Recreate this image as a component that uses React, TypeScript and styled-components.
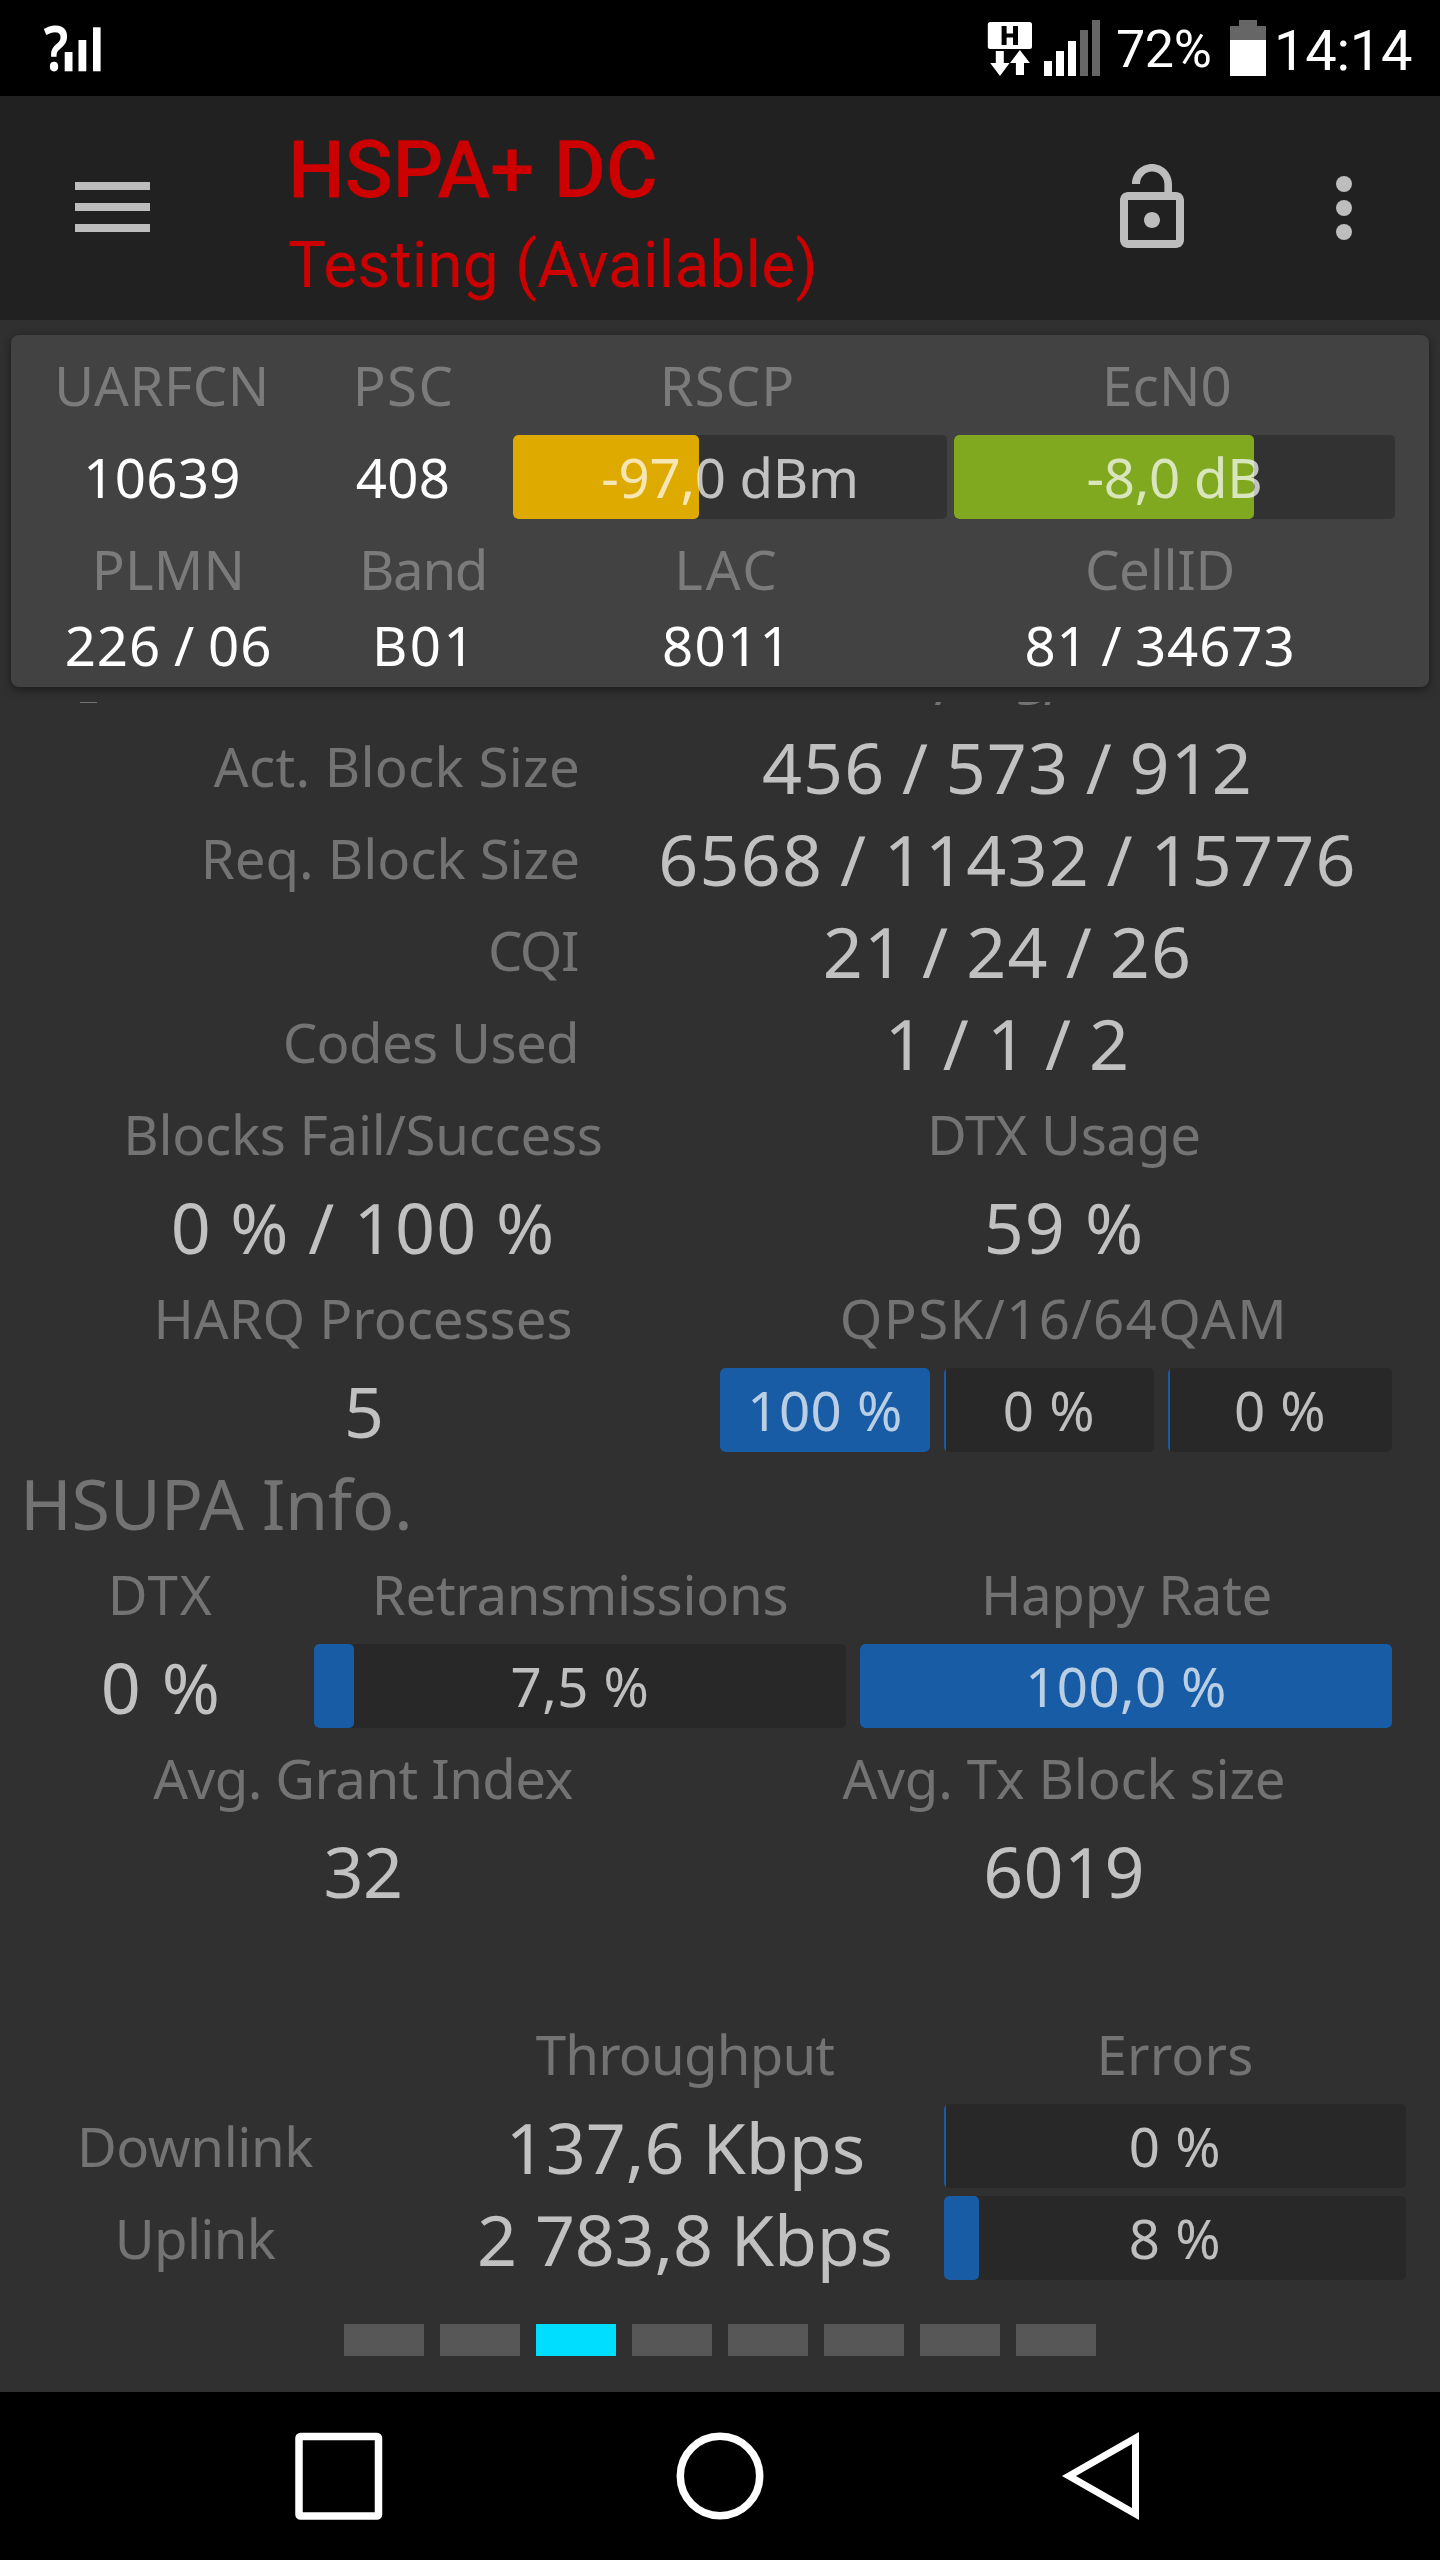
import React from "react";
import styled, { createGlobalStyle } from "styled-components";

const GlobalStyle = createGlobalStyle`
  body {
    margin: 0;
    background: #303030;
  }
  * {
    box-sizing: border-box;
  }
`;

const blue = "#195ca6";
const amber = "#dfaa00";
const green = "#80a920";

const Screen = styled.div`
  display: flex;
  flex-direction: column;
  width: 1440px;
  height: 2560px;
  overflow: hidden;
  background: #303030;
  font-family: "Noto Sans", "Open Sans", sans-serif;
`;

/* ---------- status bar ---------- */

const StatusBar = styled.header`
  display: flex;
  justify-content: space-between;
  align-items: flex-start;
  height: 96px;
  padding: 0 27px 0 40px;
  background: #000;
  color: #fff;
  font-family: Roboto, sans-serif;
`;

const StatusGroup = styled.div`
  display: flex;
  align-items: flex-start;
  height: 96px;
`;

const BatteryLevel = styled.span`
  width: 96px;
  margin: 0 18px 0 15px;
  font-size: 52px;
  line-height: 100px;
  letter-spacing: -0.37px;
  white-space: nowrap;
`;

const Clock = styled.span`
  width: 139px;
  margin-left: 8px;
  font-size: 56px;
  line-height: 102px;
  letter-spacing: -0.22px;
  white-space: nowrap;
`;

const UnknownSignalIcon = () => (
  <svg width="64" height="96" viewBox="40 0 64 96" fill="#fff">
    <text
      transform="translate(43.5 70.5) scale(0.84 1)"
      fontFamily="Noto Sans, sans-serif"
      fontWeight="600"
      fontSize="64"
    >
      ?
    </text>
    <rect x="64.7" y="52" width="7.8" height="19.3" />
    <rect x="78.5" y="40" width="7.8" height="31.3" />
    <rect x="93" y="27.3" width="7.6" height="44" />
  </svg>
);

const DataIcon = () => (
  <svg width="56" height="96" viewBox="986 0 56 96" fill="#fff">
    <rect x="986.8" y="22" width="44.2" height="27" rx="2.5" />
    <path d="M1000.6 26h5v7.4h6.4V26h5v19h-5v-7.4h-6.4V45h-5z" fill="#000" />
    <path d="M994.8 51h8v12h5.8l-9.6 13-9.8-13h5.6z" />
    <path d="M1018.9 50l10 13h-5.9v12h-8.1V63h-5.9z" />
  </svg>
);

const SignalIcon = () => (
  <svg width="58" height="96" viewBox="1042 0 58 96" fill="#fff">
    <rect x="1043" y="61" width="8" height="15" />
    <rect x="1055" y="51" width="8" height="25" />
    <rect x="1067" y="41" width="8" height="35" />
    <rect x="1079" y="30" width="8" height="46" fill="#666" />
    <rect x="1091" y="20" width="8" height="56" fill="#666" />
  </svg>
);

const BatteryIcon = () => (
  <svg width="36" height="96" viewBox="1229 0 36 96">
    <path d="M1238 20h18v6h9v14h-36V26h9z" fill="#666" />
    <rect x="1229" y="40" width="36" height="36" fill="#fff" />
  </svg>
);

/* ---------- toolbar ---------- */

const Toolbar = styled.div`
  display: flex;
  height: 224px;
  padding-right: 48px;
  background: #212121;
`;

const MenuButton = styled.div`
  display: flex;
  flex-direction: column;
  gap: 13px;
  width: 288px;
  padding: 86px 0 0 74.5px;
`;

const MenuLine = styled.span`
  width: 75.5px;
  height: 8px;
  background: #bdbdbd;
`;

const Titles = styled.div`
  display: flex;
  flex-direction: column;
  flex: 1;
  padding: 24px 0 0;
  color: #c00;
  font-family: Roboto, sans-serif;
  white-space: nowrap;
`;

const Title = styled.div`
  font-size: 80px;
  font-weight: 500;
  line-height: 100px;
  letter-spacing: -0.31px;
`;

const Subtitle = styled.div`
  font-size: 64px;
  line-height: 92px;
  letter-spacing: 0.16px;
`;

const ToolbarActions = styled.div`
  display: flex;
  gap: 96px;
  padding-top: 64px;
`;

const LockOpenIcon = () => (
  <svg width="96" height="96" viewBox="0 0 24 24" fill="#bdbdbd">
    <path d="M12 17c1.1 0 2-.9 2-2s-.9-2-2-2-2 .9-2 2 .9 2 2 2zm6-9h-1V6c0-2.76-2.24-5-5-5S7 3.24 7 6h2c0-1.71 1.34-3.1 3-3.1 1.71 0 3.1 1.39 3.1 3.1v2H6c-1.1 0-2 .9-2 2v10c0 1.1.9 2 2 2h12c1.1 0 2-.9 2-2V10c0-1.1-.9-2-2-2zm0 12H6V10h12v10z" />
  </svg>
);

const MoreIcon = () => (
  <svg width="96" height="96" viewBox="0 0 24 24" fill="#bdbdbd">
    <circle cx="12" cy="6" r="2" />
    <circle cx="12" cy="12" r="2" />
    <circle cx="12" cy="18" r="2" />
  </svg>
);

/* ---------- shared cells ---------- */

const Row = styled.div<{ $cols: string; $height?: number }>`
  display: grid;
  grid-template-columns: ${(p) => p.$cols};
  height: ${(p) => p.$height ?? 92}px;
  line-height: ${(p) => p.$height ?? 92}px;
  align-items: center;
  white-space: nowrap;
`;

const Label = styled.div<{ $track?: number; $align?: string; $card?: boolean }>`
  color: ${(p) => (p.$card ? "#7b7b7b" : "#737373")};
  font-size: 54.6px;
  letter-spacing: ${(p) => p.$track ?? 0}px;
  text-align: ${(p) => p.$align ?? "center"};
`;

const CardValue = styled.div<{ $track?: number; $space?: number; $indent?: number }>`
  padding-left: ${(p) => p.$indent ?? 0}px;
  color: #fff;
  font-size: 54.6px;
  letter-spacing: ${(p) => p.$track ?? 0}px;
  word-spacing: ${(p) => p.$space ?? 0}px;
  text-align: center;
`;

const Value = styled.div<{ $track?: number; $space?: number; $indent?: number }>`
  padding: 2px 0 0 ${(p) => p.$indent ?? 0}px;
  color: #c1c1c1;
  font-size: 70px;
  line-height: 90px;
  letter-spacing: ${(p) => p.$track ?? 0}px;
  word-spacing: ${(p) => p.$space ?? 0}px;
  text-align: center;
`;

const SectionTitle = styled.div`
  height: 92px;
  padding: 1px 0 0 20px;
  color: #737373;
  font-size: 70px;
  line-height: 92px;
  letter-spacing: -0.27px;
`;

const Track = styled.div<{ $card?: boolean; $left?: number; $right?: number }>`
  position: relative;
  height: 84px;
  margin: 0 ${(p) => p.$right ?? 0}px 0 ${(p) => p.$left ?? 0}px;
  border-radius: 5px;
  overflow: hidden;
  background: ${(p) => (p.$card ? "#323232" : "#282828")};
`;

const Fill = styled.div<{ $color: string; $percent: number }>`
  position: absolute;
  inset: 0 auto 0 0;
  width: ${(p) => p.$percent}%;
  min-width: 2px;
  border-radius: ${(p) => (p.$percent > 0 ? 5 : 0)}px;
  background: ${(p) => p.$color};
`;

const TrackText = styled.div<{ $track?: number }>`
  position: relative;
  color: rgba(255, 255, 255, 0.7);
  font-size: 54.6px;
  line-height: 84px;
  letter-spacing: ${(p) => p.$track ?? 0}px;
  text-align: center;
`;

type MeterProps = {
  text: string;
  percent: number;
  color?: string;
  track?: number;
  card?: boolean;
  left?: number;
  right?: number;
};

const Meter = ({ text, percent, color = blue, track, card, left, right }: MeterProps) => (
  <Track $card={card} $left={left} $right={right}>
    <Fill $color={color} $percent={percent} />
    <TrackText $track={track}>{text}</TrackText>
  </Track>
);

/* ---------- panels ---------- */

const CardArea = styled.div`
  height: 382px;
  padding: 15px 11px 15px;
  overflow: hidden;
`;

const Card = styled.section`
  height: 352px;
  padding-top: 4px;
  border-radius: 8px;
  background: #424242;
  box-shadow: 0 3px 10px rgba(0, 0, 0, 0.45);
`;

const Details = styled.section`
  height: 1306px;
`;

const ScrolledEdge = styled.svg`
  display: block;
`;

const Totals = styled.section`
  height: 316px;
`;

const Pager = styled.div`
  display: flex;
  justify-content: center;
  gap: 16px;
  height: 68px;
`;

const PageMark = styled.span<{ $active: boolean }>`
  width: 80px;
  height: 32px;
  background: ${(p) => (p.$active ? "#00deff" : "#575757")};
`;

const NavBar = styled.nav`
  display: flex;
  justify-content: space-between;
  height: 168px;
  padding: 36px 297px 0 291px;
  background: #000;
`;

const NavIcon = styled.svg`
  width: 96px;
  height: 96px;
  fill: none;
  stroke: #fff;
`;

const pairCols = "580px 855px";
const halfCols = "726px 676px";

export default function App() {
  return (
    <>
      <GlobalStyle />
      <Screen>
        <StatusBar>
          <UnknownSignalIcon />
          <StatusGroup>
            <DataIcon />
            <SignalIcon />
            <BatteryLevel>72%</BatteryLevel>
            <BatteryIcon />
            <Clock>14:14</Clock>
          </StatusGroup>
        </StatusBar>

        <Toolbar>
          <MenuButton>
            <MenuLine />
            <MenuLine />
            <MenuLine />
          </MenuButton>
          <Titles>
            <Title>HSPA+ DC</Title>
            <Subtitle>Testing (Available)</Subtitle>
          </Titles>
          <ToolbarActions>
            <LockOpenIcon />
            <MoreIcon />
          </ToolbarActions>
        </Toolbar>

        <CardArea>
          <Card>
            <Row $cols="302px 181px 467px 412px">
              <Label $card $track={0.53}>UARFCN</Label>
              <Label $card $track={1.35}>PSC</Label>
              <Label $card $track={1.06}>RSCP</Label>
              <Label $card $track={0.18}>EcN0</Label>
            </Row>
            <Row $cols="302px 180px 461px 441px">
              <CardValue $track={0.3}>10639</CardValue>
              <CardValue $track={0.22}>408</CardValue>
              <Meter card text="-97,0 dBm" percent={42.9} color={amber} track={-0.32} left={20} right={7} />
              <Meter card text="-8,0 dB" percent={68} color={green} track={-0.3} />
            </Row>
            <Row $cols="315px 194px 414px 452px">
              <Label $card $track={0.18}>PLMN</Label>
              <Label $card $track={-1.35}>Band</Label>
              <Label $card $track={2.8}>LAC</Label>
              <Label $card $track={-0.27}>CellID</Label>
            </Row>
            <Row $cols="315px 194px 414px 452px" $height={60}>
              <CardValue $track={0.9} $space={-2.2}>226 / 06</CardValue>
              <CardValue $track={2.34} $indent={3}>B01</CardValue>
              <CardValue $track={1.21}>8011</CardValue>
              <CardValue $track={0.9} $space={-2.6}>81 / 34673</CardValue>
            </Row>
          </Card>
        </CardArea>

        <Details>
          <ScrolledEdge width="1440" height="18" viewBox="0 0 1440 18">
            <rect x="80" y="0" width="17" height="1" fill="#737373" />
            <path d="M936 0h5l-1 3h-5z M1045.500 0h5l-1 3h-5z" fill="#737373" />
            <path d="M1018.500 0h21.500q-5 3-10 3h-5q-4 0-6.500-1z" fill="#737373" />
          </ScrolledEdge>
          <Row $cols={pairCols}>
            <Label $align="right" $track={0.26}>Act. Block Size</Label>
            <Value $track={1.2} $space={-3}>456 / 573 / 912</Value>
          </Row>
          <Row $cols={pairCols}>
            <Label $align="right" $track={-0.04}>Req. Block Size</Label>
            <Value $track={1.2} $space={-2.75}>6568 / 11432 / 15776</Value>
          </Row>
          <Row $cols="578px 859px">
            <Label $align="right" $track={-1.5}>CQI</Label>
            <Value $track={1.2} $space={-2.5}>21 / 24 / 26</Value>
          </Row>
          <Row $cols="579px 857px">
            <Label $align="right" $track={-0.64}>Codes Used</Label>
            <Value $track={1.2} $space={-2.6}>1 / 1 / 2</Value>
          </Row>
          <Row $cols={halfCols}>
            <Label $track={-0.29}>Blocks Fail/Success</Label>
            <Label $track={-0.21}>DTX Usage</Label>
          </Row>
          <Row $cols={halfCols}>
            <Value $track={1.2} $space={-1}>0 % / 100 %</Value>
            <Value $track={1.04}>59 %</Value>
          </Row>
          <Row $cols={halfCols}>
            <Label $track={-0.06}>HARQ Processes</Label>
            <Label $track={1.34}>QPSK/16/64QAM</Label>
          </Row>
          <Row $cols="720px 224px 224px 224px">
            <Value $indent={8}>5</Value>
            <Meter text="100 %" percent={100} track={0.48} right={14} />
            <Meter text="0 %" percent={0} track={0.64} right={14} />
            <Meter text="0 %" percent={0} track={0.44} />
          </Row>
          <SectionTitle>HSUPA Info.</SectionTitle>
          <Row $cols="321px 518px 575px">
            <Label $track={1.72}>DTX</Label>
            <Label $track={-0.29}>Retransmissions</Label>
            <Label $track={-0.31}>Happy Rate</Label>
          </Row>
          <Row $cols="314px 546px 532px">
            <Value $indent={8} $track={1.38}>0 %</Value>
            <Meter text="7,5 %" percent={7.5} track={0.43} right={14} />
            <Meter text="100,0 %" percent={100} track={0.33} />
          </Row>
          <Row $cols={halfCols}>
            <Label $track={-0.59}>Avg. Grant Index</Label>
            <Label $track={-0.18}>Avg. Tx Block size</Label>
          </Row>
          <Row $cols={halfCols}>
            <Value $track={-0.5}>32</Value>
            <Value $track={0.36}>6019</Value>
          </Row>
        </Details>

        <Totals>
          <Row $cols="426px 518px 462px">
            <span />
            <Label $track={-0.83}>Throughput</Label>
            <Label $track={0.17}>Errors</Label>
          </Row>
          <Row $cols="390px 554px 462px">
            <Label $track={-0.41}>Downlink</Label>
            <Value $indent={37} $track={-0.08}>137,6 Kbps</Value>
            <Meter text="0 %" percent={0} track={0.5} />
          </Row>
          <Row $cols="390px 554px 462px">
            <Label $track={-0.68}>Uplink</Label>
            <Value $indent={36} $track={-0.21}>2 783,8 Kbps</Value>
            <Meter text="8 %" percent={7.6} track={0.5} />
          </Row>
        </Totals>

        <Pager>
          {Array.from({ length: 8 }, (_, i) => (
            <PageMark key={i} $active={i === 2} />
          ))}
        </Pager>

        <NavBar>
          <NavIcon viewBox="291 2428 96 96" strokeWidth="7.5">
            <rect x="299" y="2436.500" width="79.500" height="79.500" rx="1.500" />
          </NavIcon>
          <NavIcon viewBox="669 2428 96 96" strokeWidth="7.5">
            <circle cx="720" cy="2476" r="39.700" />
          </NavIcon>
          <NavIcon viewBox="1047 2428 96 96" strokeWidth="7">
            <path d="M1135.500 2438L1069 2476L1135.500 2514Z" />
          </NavIcon>
        </NavBar>
      </Screen>
    </>
  );
}
